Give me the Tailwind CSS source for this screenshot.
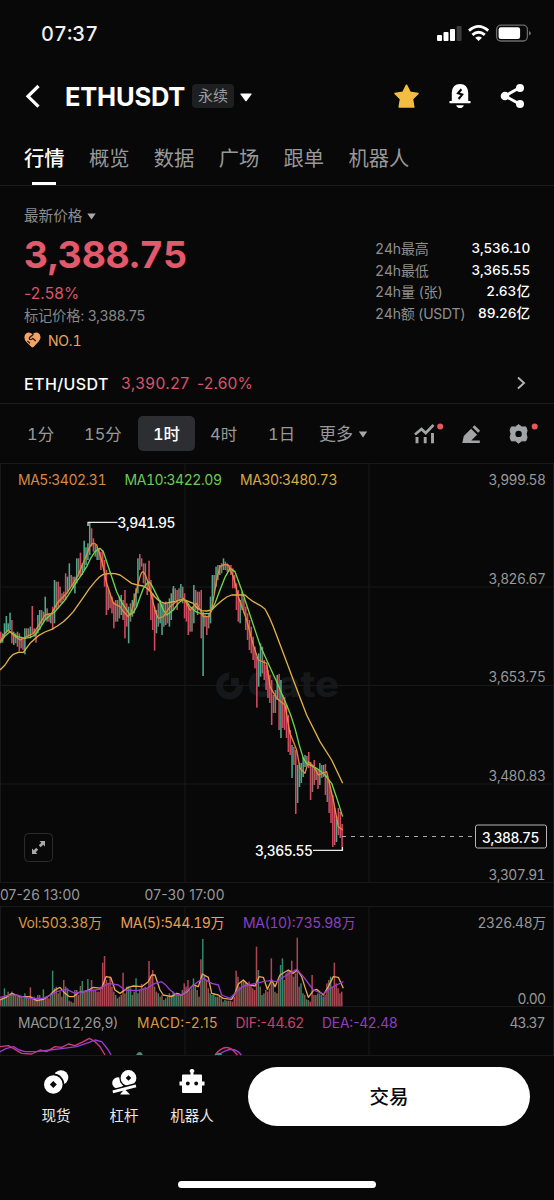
<!DOCTYPE html>
<html lang="zh-CN">
<head>
<meta charset="utf-8">
<title>ETHUSDT 永续</title>
<script src="https://cdn.jsdelivr.net/npm/@tailwindcss/browser@4"></script>
</head>
<body class="bg-[#080808]">
<div class="w-[554px] h-[1200px] overflow-hidden bg-[#080808] text-white font-['Inter','Noto_Sans_CJK_SC',sans-serif] tabular-nums flex flex-col whitespace-nowrap">

  <!-- status bar -->
  <div class="h-[66px] shrink-0 flex items-center justify-between pl-[41px] pr-[22px]">
    <span class="pt-[2px] text-[20px] leading-none font-medium text-[#f0f0f0]">07:37</span>
    <svg class="w-[96px] h-[20px]" viewBox="436 23 96 20">
      <g fill="#fff"><rect x="437" y="35" width="5" height="6" rx="1"/><rect x="443.5" y="32" width="5" height="9" rx="1"/><rect x="450" y="29" width="5" height="12" rx="1"/><rect x="456.600" y="26" width="5" height="15" rx="1" fill="#3c3c3c"/></g>
      <g fill="none" stroke="#fff" stroke-width="2.8"><path d="M469 30.600Q478.600 22.200 488.200 30.600"/><path d="M472.400 34.900Q478.600 29.700 484.800 34.900"/></g>
      <path d="M475.200 37.800Q478.600 35.200 482 37.800L478.600 41Z" fill="#fff"/>
      <rect x="496.600" y="25.200" width="30.800" height="15.800" rx="4.200" fill="none" stroke="#6b6b6b" stroke-width="1.300"/>
      <rect x="498.600" y="27.200" width="21.500" height="11.800" rx="2.300" fill="#fff"/>
      <path d="M529 31v4.400q2-.8 2-2.200t-2-2.200z" fill="#6b6b6b"/>
    </svg>
  </div>

  <!-- title bar -->
  <div class="h-[60px] shrink-0 flex items-center pl-[25px] pr-[29px]">
    <svg class="w-4 h-6 shrink-0" viewBox="0 0 16 24"><path d="M13.500 2L3 12.300 13.500 22.600" fill="none" stroke="#fff" stroke-width="3.200"/></svg>
    <h1 class="ml-[24px] pt-[2px] w-[120px] text-[25.500px] leading-none font-bold tracking-[-0.2px]">ETHUSDT</h1>
    <span class="ml-[7px] w-[42px] h-[24px] rounded bg-[#1d1f21] text-[#9a9b9c] text-[15px] leading-[23px] text-center">永续</span>
    <svg class="ml-[6px] mt-[2px] w-[12px] h-[9px]" viewBox="0 0 12 9"><path d="M1 .5h10q1 0 .4.900L6.800 7.800q-.8 1-1.600 0L.6 1.400Q0 .5 1 .5z" fill="#fff"/></svg>
    <div class="ml-auto flex items-center gap-[27px]">
      <svg class="w-[28px] h-[28px]" viewBox="0 0 28 28"><path d="M13.500 3.200l3.500 7 8 1.200-5.500 5.600 1.300 8H6.200l1.300-8L2 11.400l8-1.200z" fill="#f3be40" stroke="#f3be40" stroke-width="1.500" stroke-linejoin="round"/></svg>
      <svg class="w-[24px] h-[26px]" viewBox="0 0 24 26"><path d="M3.800 18V9.400Q4.500 1 12 1t8.200 8.400V18h2.300v2.200h-21V18z" fill="#fff"/><path d="M8.200 22.200h7.600q-.8 2.800-3.800 2.800t-3.800-2.800z" fill="#fff"/><path d="M13.400 6.200L10 10.200l4.200 1.400-3.600 4.400" fill="none" stroke="#080808" stroke-width="2.100"/></svg>
      <svg class="w-[26px] h-[26px]" viewBox="0 0 26 26"><path d="M20.500 4.800L6 13l14.500 8" fill="none" stroke="#fff" stroke-width="3"/><circle cx="21" cy="5" r="4" fill="#fff"/><circle cx="6" cy="13" r="4.300" fill="#fff"/><circle cx="21" cy="21" r="4" fill="#fff"/></svg>
    </div>
  </div>

  <!-- tabs -->
  <div class="h-[60px] shrink-0 border-b border-[#1c1c1d] flex pl-[24px] gap-[24.300px] text-[20.300px] leading-[66px] text-[#98999a]">
    <div class="flex flex-col items-center text-white font-medium"><span class="h-[56px]">行情</span><i class="block w-6 h-[3px] bg-white"></i></div>
    <span>概览</span><span>数据</span><span>广场</span><span>跟单</span><span>机器人</span>
  </div>

  <!-- price summary -->
  <div class="h-[177px] shrink-0 flex justify-between pl-[24px] pr-[24px]">
    <div class="flex flex-col pt-[19px]">
      <div class="h-[22px] flex items-center gap-[5px] text-[14.600px] leading-none text-[#8c8d8e]">最新价格<svg class="w-[9px] h-[7px]" viewBox="0 0 9 7"><path d="M.3.400h8.400L4.500 6.600z" fill="#a8a8a8"/></svg></div>
      <div class="h-[56px] flex items-center text-[37.500px] leading-none font-bold tracking-[-0.3px] text-[#e2596b]">3,388.75</div>
      <div class="h-[22px] flex items-center text-[15.500px] leading-none normal-nums tracking-[0.150px] text-[#d8546a]">-2.58%</div>
      <div class="h-[23px] flex items-center text-[14.300px] leading-none normal-nums tracking-[-0.250px] text-[#858687]"><span>标记价格: 3,388.75</span></div>
      <div class="h-[26px] flex items-center gap-[7px] text-[14px] leading-none tracking-[-0.2px] text-[#e8a860]">
        <svg class="-mt-[2px] w-[17px] h-[16px]" viewBox="0 0 17 16"><path d="M8.500 2.200Q11-.4 14 .8q3 1.500 2.400 5.400-.5 2.300-2.400 4L9.500 15q-1 .9-2 0L2.300 10Q0 7.700.5 4.500 1.200 1 4.200.6q2.500-.2 4.300 1.600z" fill="#f0a467"/><path d="M9.500 2.200L5.600 5.500q-.8 1.700.7 2.100 1.300.2 2.500-1.200l3 2.600M3.400 8.900l2.500 2.400" fill="none" stroke="#2b1a10" stroke-width="1.300"/></svg>NO.1
      </div>
    </div>
    <div class="pt-[52px] w-[155px] text-[14px] leading-[21.500px]">
      <div class="flex justify-between"><span class="text-[#8e8f90] tracking-[-0.150px]">24h最高</span><span class="font-medium text-[13.600px] tracking-[-0.2px]">3,536.10</span></div>
      <div class="flex justify-between"><span class="text-[#8e8f90] tracking-[-0.150px]">24h最低</span><span class="font-medium text-[13.600px] tracking-[-0.2px]">3,365.55</span></div>
      <div class="flex justify-between"><span class="text-[#8e8f90] tracking-[-0.150px]">24h量 (张)</span><span class="font-medium text-[13.600px]">2.63亿</span></div>
      <div class="flex justify-between"><span class="text-[#8e8f90] tracking-[-0.250px]">24h额 (USDT)</span><span class="font-medium text-[13.600px] tracking-[-0.1px]">89.26亿</span></div>
    </div>
  </div>

  <!-- spot price row -->
  <div class="h-[41px] shrink-0 border-b border-[#1c1c1d] flex items-center pt-[2px] pl-[24px] pr-[28px] text-[15.600px] leading-none normal-nums text-[#d8546a]">
    <span class="w-[97px] text-white text-[16px] font-medium tracking-[0.400px]">ETH/USDT</span><span class="w-[76px] tracking-[0.450px]">3,390.27</span><span class="tracking-[0.150px]">-2.60%</span>
    <svg class="ml-auto -mt-[2px] w-[10px] h-[14px]" viewBox="0 0 10 14"><path d="M2 1.500L8 7l-6 5.500" fill="none" stroke="#b5b5b5" stroke-width="1.900"/></svg>
  </div>

  <!-- intervals -->
  <div class="h-[59px] shrink-0 flex items-center pl-[27px] text-[16.400px] leading-none text-[#98999a]">
    <span class="w-[57px] pt-[2px]">1分</span><span class="w-[54px] pt-[2px]">15分</span>
    <span class="w-[57px] h-[35px] pt-[2px] rounded-[5px] bg-[#2c2e31] text-white font-medium flex items-center justify-center">1时</span>
    <span class="ml-[15px] w-[58px] pt-[2px]">4时</span><span class="w-[51px] pt-[2px]">1日</span><span class="pt-[2px] text-[17px]">更多</span>
    <svg class="ml-[5px] mt-[1px] w-[10px] h-[7px]" viewBox="0 0 9 7"><path d="M.3.400h8.400L4.500 6.600z" fill="#a8a8a8"/></svg>
    <svg class="ml-auto mr-[14px] w-[128px] h-[26px]" viewBox="412 421 128 26">
      <g fill="none" stroke="#a3a4a5" stroke-width="2.700"><path d="M415 434.500l6.500-5.500 4.200 4 7.800-8"/><path d="M417 437v6.300M425.200 437v6.300M432.500 433v10.300" stroke-width="2.900"/></g>
      <circle cx="440.200" cy="426.500" r="3" fill="#e5595c"/>
      <path d="M462.300 443l1.500-7 7.300-7.300 6 6-5.800 5.800h8.500v2.500z" fill="#a3a4a5"/><path d="M472.500 427.200l2-2 5.600 5.600-2 2z" fill="#a3a4a5"/>
      <path d="M518.600 424.600l3.200 2.400 4-.1 1.300 3.500-1 3.500 1 3.500-1.300 3.500-4-.1-3.200 2.400-3.200-2.400-4 .1-1.300-3.500 1-3.500-1-3.500 1.300-3.500 4 .1z" fill="#a3a4a5" stroke="#a3a4a5" stroke-linejoin="round"/><circle cx="518.600" cy="433.900" r="3.200" fill="#080808"/>
      <circle cx="534.700" cy="426.500" r="3" fill="#e5595c"/>
    </svg>
  </div>

  <!-- chart -->
  <svg id="chart" class="w-[554px] h-[593px] shrink-0 block" viewBox="0 463 554 593" font-size="14">
    <path d="M0 463.500H554M0 587H554M0 685.500H554M0 784H554M0 882.500H554M0 906.500H554M0 1006.500H554M0 1055.500H554M.5 463V882M185 463V882M369 463V882M.5 906V1055M185 906V1055M369 906V1055M553.500 463V1055" stroke="#18191a" fill="none"/>
    <!-- watermark -->
    <g opacity=".9"><circle cx="229.500" cy="686" r="10" fill="none" stroke="#17191c" stroke-width="7"/><path d="M229 673h13v12h-13z" fill="#080808"/><path d="M231 678h8v7h-8z" fill="#17191c"/><text x="247" y="697" font-size="36" font-weight="800" fill="#17191c" textLength="92" lengthAdjust="spacingAndGlyphs">Gate</text></g>
    <g id="bars"></g>
    <g transform="translate(0 460) scale(.333333)" fill="none" stroke-width="4" stroke-linejoin="round">
      <polyline stroke="#e0b04a" points="0,630 15,615 28,595 40,583 55,577 70,577 90,550 115,527 135,516 155,508 172,498 190,485 205,471 220,455 250,412 268,386 285,365 298,351 310,343 330,340 345,341 360,345 378,358 395,370 412,375 430,378 440,384 450,392 465,411 480,425 495,430 520,425 550,418 580,430 592,445 605,452 620,453 635,450 650,435 665,422 680,411 695,405 735,405 745,414 760,425 780,436 795,447 808,472 820,500 850,580 880,660 895,700 920,765 960,845 995,900 1028,970"/>
      <polyline stroke="#6fd84f" points="0,548 15,528 30,515 50,529 75,535 90,532 105,525 120,504 135,480 150,466 165,455 195,420 212,394 230,365 245,344 260,320 272,295 285,275 300,265 310,275 330,335 350,395 365,427 380,450 390,465 400,458 410,440 420,412 430,385 445,365 452,370 460,385 480,425 490,450 500,465 520,450 535,430 550,418 560,425 570,440 588,455 605,462 630,460 645,430 660,390 675,352 690,325 705,335 725,390 755,480 780,555 800,600 832,670 860,735 872,765 885,805 898,856 910,895 920,910 950,925 975,945 995,970 1010,1013 1028,1070"/>
      <polyline stroke="#e58a3c" points="0,545 12,524 25,510 42,527 60,540 80,530 100,520 120,490 135,465 155,460 165,442 175,425 200,400 220,370 235,345 248,312 260,285 268,262 275,252 283,250 290,255 305,300 320,370 340,430 360,440 372,457 385,470 393,458 400,435 410,388 420,350 425,337 430,335 437,347 445,370 460,430 468,460 475,475 490,470 510,440 530,424 550,415 560,430 570,450 590,430 600,448 610,470 628,470 636,440 645,390 652,350 660,320 672,314 685,315 700,350 715,410 740,480 760,555 775,600 800,610 810,680 830,715 855,735 870,820 890,870 900,925 915,940 925,905 940,918 955,945 980,935 1000,1020 1015,1100 1028,1110"/>
    </g>
    <g transform="translate(0 880) scale(.333333)" fill="none" stroke-width="4" stroke-linejoin="round">
      <polyline stroke="#e9a656" points="0,360 18,352 35,340 60,350 90,350 110,362 130,358 150,345 165,330 180,322 195,340 208,350 220,350 235,338 260,333 280,322 305,325 318,290 332,292 345,330 360,340 372,332 385,322 400,318 425,320 445,305 455,285 465,285 480,330 490,345 515,350 530,340 545,345 560,335 580,315 595,320 607,282 625,292 635,340 655,345 670,355 695,358 705,340 715,312 730,300 745,314 765,318 777,290 790,292 802,328 815,300 825,320 840,285 865,270 880,280 892,270 905,290 915,322 925,352 940,332 950,328 970,345 985,320 1000,290 1015,292 1030,325"/>
      <polyline stroke="#9a3bd2" points="0,352 25,346 50,345 70,351 90,355 130,355 150,346 170,335 200,328 225,340 260,333 300,328 312,318 325,310 355,315 375,330 410,332 440,325 465,310 485,305 498,316 510,330 530,345 545,345 570,325 590,308 610,295 635,310 655,315 665,345 690,355 710,335 730,318 760,312 790,305 810,302 830,305 860,285 890,268 910,290 940,330 970,342 990,325 1010,315 1030,305"/>
      <polyline stroke="#d23a78" points="0,500 25,497 45,508 65,520 95,522 120,510 140,515 165,500 185,502 205,492 225,497 250,485 268,475 285,485 300,500 315,525"/>
      <polyline stroke="#9a3bd2" points="0,515 18,506 40,500 58,510 75,515 110,515 150,510 190,505 230,500 265,488 285,480 305,485 325,510 333,525"/>
      <path stroke="#d23a78" d="M645 525Q680 480 712 525"/><path stroke="#9a3bd2" d="M655 525Q700 492 724 525"/>
      <path fill="#4d8f7b" d="M408 525l7-8h8l6 8zM645 525l8-6h8l6 6z"/>
    </g>
    <!-- high, low and last price markers -->
    <path d="M88 526V522.300H117.500M313 850.300H342.500V847" fill="none" stroke="#e8e8e8" stroke-width="1.200"/>
    <path d="M342 836.500H474" stroke="#a8a8a8" stroke-width="1.200" stroke-dasharray="4 5"/>
    <rect x="475.500" y="825" width="71" height="23" rx="2" fill="#080808" stroke="#b5b5b5"/>
    <g fill="#fff" font-weight="500" font-size="13.800"><text x="117.500" y="528" textLength="58">3,941.95</text><text x="255" y="856" textLength="58">3,365.55</text><text x="482" y="843" textLength="57.500">3,388.75</text></g>
    <rect x="24.500" y="833.500" width="28" height="28" rx="4" fill="#080808" stroke="#2a2b2c"/>
    <path d="M39.500 841H45V846.500L43.200 844.800 40.700 847.200 38.800 845.300 41.300 842.800zM37.500 854H32V848.500L33.800 850.200 36.200 847.800 38.200 849.700 35.700 852.200z" fill="#a8a8a8"/>
    <text x="18" y="485" textLength="88.500" fill="#d68a45">MA5:3402.31</text><text x="124.500" y="485" textLength="97.500" fill="#6cc957">MA10:3422.09</text><text x="240" y="485" textLength="97.500" fill="#d9a845">MA30:3480.73</text>
    <g fill="#97989a" font-size="13.800">
      <text x="488.500" y="485" textLength="57.500">3,999.58</text><text x="488.500" y="584" textLength="57.500">3,826.67</text><text x="488.500" y="682" textLength="57.500">3,653.75</text><text x="488.500" y="780.500" textLength="57.500">3,480.83</text><text x="488.500" y="879.500" textLength="57">3,307.91</text>
      <g class="normal-nums"><text x="0" y="900" textLength="80">07-26 13:00</text><text x="144.500" y="900" textLength="80">07-30 17:00</text></g>
      <text x="477.500" y="927.500" textLength="68.500">2326.48万</text><text x="517.500" y="1003.500" textLength="28.500">0.00</text><text x="509.500" y="1028" textLength="36">43.37</text>
      <text x="18" y="1028" textLength="100.500">MACD(12,26,9)</text>
    </g>
    <text x="18" y="927.500" textLength="84" fill="#d99a45">Vol:503.38万</text><text x="120.500" y="927.500" textLength="104" fill="#e8a05a">MA(5):544.19万</text><text x="243" y="927.500" textLength="112.500" fill="#8c40c0">MA(10):735.98万</text>
    <g class="normal-nums" font-size="13.800"><text x="137" y="1028" textLength="80.500" fill="#d99a3d">MACD:-2.15</text><text x="235.500" y="1028" textLength="68.500" fill="#c4436e">DIF:-44.62</text><text x="322" y="1028" textLength="75.500" fill="#8c40c0">DEA:-42.48</text></g>
  </svg>

  <!-- bottom bar -->
  <div class="h-[82px] shrink-0 flex items-start pl-[22px] pt-[11px] text-[14.500px] leading-[20px] text-[#e8e8e8]">
    <div class="pt-[2px] w-[68px] flex flex-col items-center gap-[11px]">
      <svg class="w-[26px] h-[26px]" viewBox="0 0 26 26"><circle cx="18" cy="8.500" r="7.300" fill="#fff"/><circle cx="10.300" cy="15.500" r="11" fill="#080808"/><circle cx="10.300" cy="15.500" r="9.300" fill="#fff"/><path d="M10.300 12l3.500 3.500-3.500 3.500-3.500-3.500z" fill="#080808"/></svg>
      <span>现货</span></div>
    <div class="pt-[2px] w-[68px] flex flex-col items-center gap-[11px]">
      <svg class="w-[26px] h-[26px]" viewBox="0 0 26 26"><circle cx="7" cy="14" r="5.800" fill="#fff"/><circle cx="17.500" cy="9" r="9.200" fill="#080808"/><circle cx="17.500" cy="9" r="7.900" fill="#fff"/><path d="M17.500 6.200l2.800 2.800-2.800 2.800-2.800-2.800z" fill="#080808"/><path d="M1.500 23L26 16.500" stroke="#080808" stroke-width="5.500"/><path d="M1.800 22.800L25 16.800" stroke="#fff" stroke-width="2.800"/><path d="M13.500 20l5.500 5.500H9z" fill="#fff"/></svg>
      <span>杠杆</span></div>
    <div class="pt-[2px] w-[68px] flex flex-col items-center gap-[11px]">
      <svg class="w-[26px] h-[26px]" viewBox="0 0 26 26"><path d="M4 5.500h7.600V3.800a2.200 2.200 0 1 1 2.800 0v1.700H22q1 0 1 1v6h2.500V16.500H23v6.500q0 1-1 1H4q-1 0-1-1V16.500H.500v-4H3v-6q0-1 1-1z" fill="#fff"/><circle cx="8.800" cy="14.500" r="1.900" fill="#080808"/><circle cx="17.200" cy="14.500" r="1.900" fill="#080808"/></svg>
      <span>机器人</span></div>
    <div class="ml-[22px] w-[282px] h-[59px] rounded-full bg-white text-[#080808] text-[19.500px] font-medium leading-[60px] text-center">交易</div>
  </div>
  <div class="mt-auto mb-[12px] ml-[178px] w-[198px] h-[7px] shrink-0 rounded-full bg-white"></div>
</div>

<script>
  // Candles: high, low (thirds of a pixel below y=460) and kind: g up, r down, m flat. One every 1.853px.
  const PITCH = 5.56;
  const COLORS = { g: '#4fa78d', r: '#d34a60', m: '#8d7668' };
  const runs = [
    [0, `515 550r 520 548g 490 530g 468 520g 490 515g 458 510g 480 550r 515 555g 520 550m 515 560m 520 575r 530 565m 535 570r 505 583g 505 530m 505 530m 500 535g 438 520r 505 530m 510 548r 465 520g 450 510g 450 495m 455 490m 410 480g 445 485m 460 485r 465 490g 440 510r 360 490g 365 450m 365 445r 380 430m 400 430r 395 420r 340 420r 350 400g 310 390g 345 380m 350 385r 350 400g 295 370g 295 350m 278 350r 310 345g 242 330g 262 315g 250 300g 187 285g 205 260r 235 275r 255 290m 260 300g 265 300m 275 330r 270 320r 300 380r 330 465r 385 450m 400 445r 410 460r 425 505r 420 485m 420 485m 410 475m 405 465g 420 480m 390 535r 430 500r 440 550g 430 485m 420 470g 400 460m 385 440g 295 400g 282 330r 295 320m 310 370r 310 380m 370 405r 302 395r 360 480r 400 510r 440 572r 450 520g 430 500m 420 490g 430 525g 430 500m 425 495m 430 490r 415 500g 400 480g 385 450m`],
    [518, `378 430g 385 420m 390 450r 385 420m 372 415g 380 430m 400 475r 430 485r 440 525r 450 515m 440 515m 375 490g 390 450r 395 465m 395 440r 390 535r 455 648g 465 500m 470 525r 460 505m 410 490g 345 450g 345 400m 320 380g 315 360m 315 345g 310 340m 295 330g 305 330m 310 335m 315 335r 315 345r 325 385r 345 385r 370 450r 390 485r 420 490g 395 450m 415 460r 440 510r 460 540r 480 570r 500 580r 530 600r 560 625r 590 743r 580 680g 550 650g 560 640m 600 660r 615 690r 630 714r 645 729r 660 795r 705 759m 690 759m 645 720g 642 810r 660 834g 705 804r 711 810r 735 834r 765 876r 810 885r 855 954g 861 915r 870 1062r 915 1029g 909 981g 909 969g 891 951g 885 921g 888 918m 876 924r 906 1020r 915 996m 900 975r 924 960m 930 987r 909 975g 915 954m 915 951g 912 1005r 945 1026m 960 1059r 990 1089r 1005 1161r 1044 1155r 1068 1146g 1044 1125r 1056 1134r 1092 1170r`]
  ];
  let out = '';
  for (const [start, src] of runs) {
    [...src.matchAll(/(\d+) (\d+)([grm])/g)].forEach((c, i) => {
      const x = (start + i * PITCH) / 3, y = 460 + c[1] / 3;
      out += `<rect x="${x.toFixed(2)}" y="${y.toFixed(2)}" width="1.55" height="${((c[2] - c[1]) / 3).toFixed(2)}" fill="${COLORS[c[3]]}"/>`;
    });
  }
  // Volume bars: top (thirds of a pixel below y=880) and kind, standing on y=1006.3.
  const VCOLORS = { g: '#35866a', r: '#b04552', m: '#7a6150' };
  const volume = '355r350g325g345m335m345g335m340m345r350m345g350r355m340g350m355m322r350m350m355r345m345m355m328g350m350r355r345m272g325m320m340m335m350m300r320g325g362r365r368g330m330m345r318m303g335r335m297g330r300r330m330m335r335r320r248r228r300r310r290r320r335m345m355m350m345m278r340m320m320g325g345m335m295g340m330r312r325m320r325r243r290r270r320m335r340g350m345m360g355m350g340m345m335g345g345g340m345g330m310r320m300r330r325m295g320m330m350m238r177g285m300r325m340g345g340g350m350m345m355m365m360g362m362m362m365r350r272r290m320m305m300r305m310r305r315r325r330r200r270g320m345g340m330r335r325r235r310m335m340m295m255g235g300m280r270r270r242r290r280m173r320r310g340g345m358g360m365r285r345m345m340m340g345g350g345m310r300m290g320r248r310r325r340r335r';
  [...volume.matchAll(/(\d+)([grm])/g)].forEach((c, i) => {
    const x = i * PITCH / 3;
    out += `<rect x="${x.toFixed(2)}" y="${(880 + c[1] / 3).toFixed(2)}" width="1.5" height="${((379 - c[1]) / 3).toFixed(2)}" fill="${VCOLORS[c[2]]}"/>`;
  });
  document.getElementById('bars').innerHTML = out;
</script>
</body>
</html>
